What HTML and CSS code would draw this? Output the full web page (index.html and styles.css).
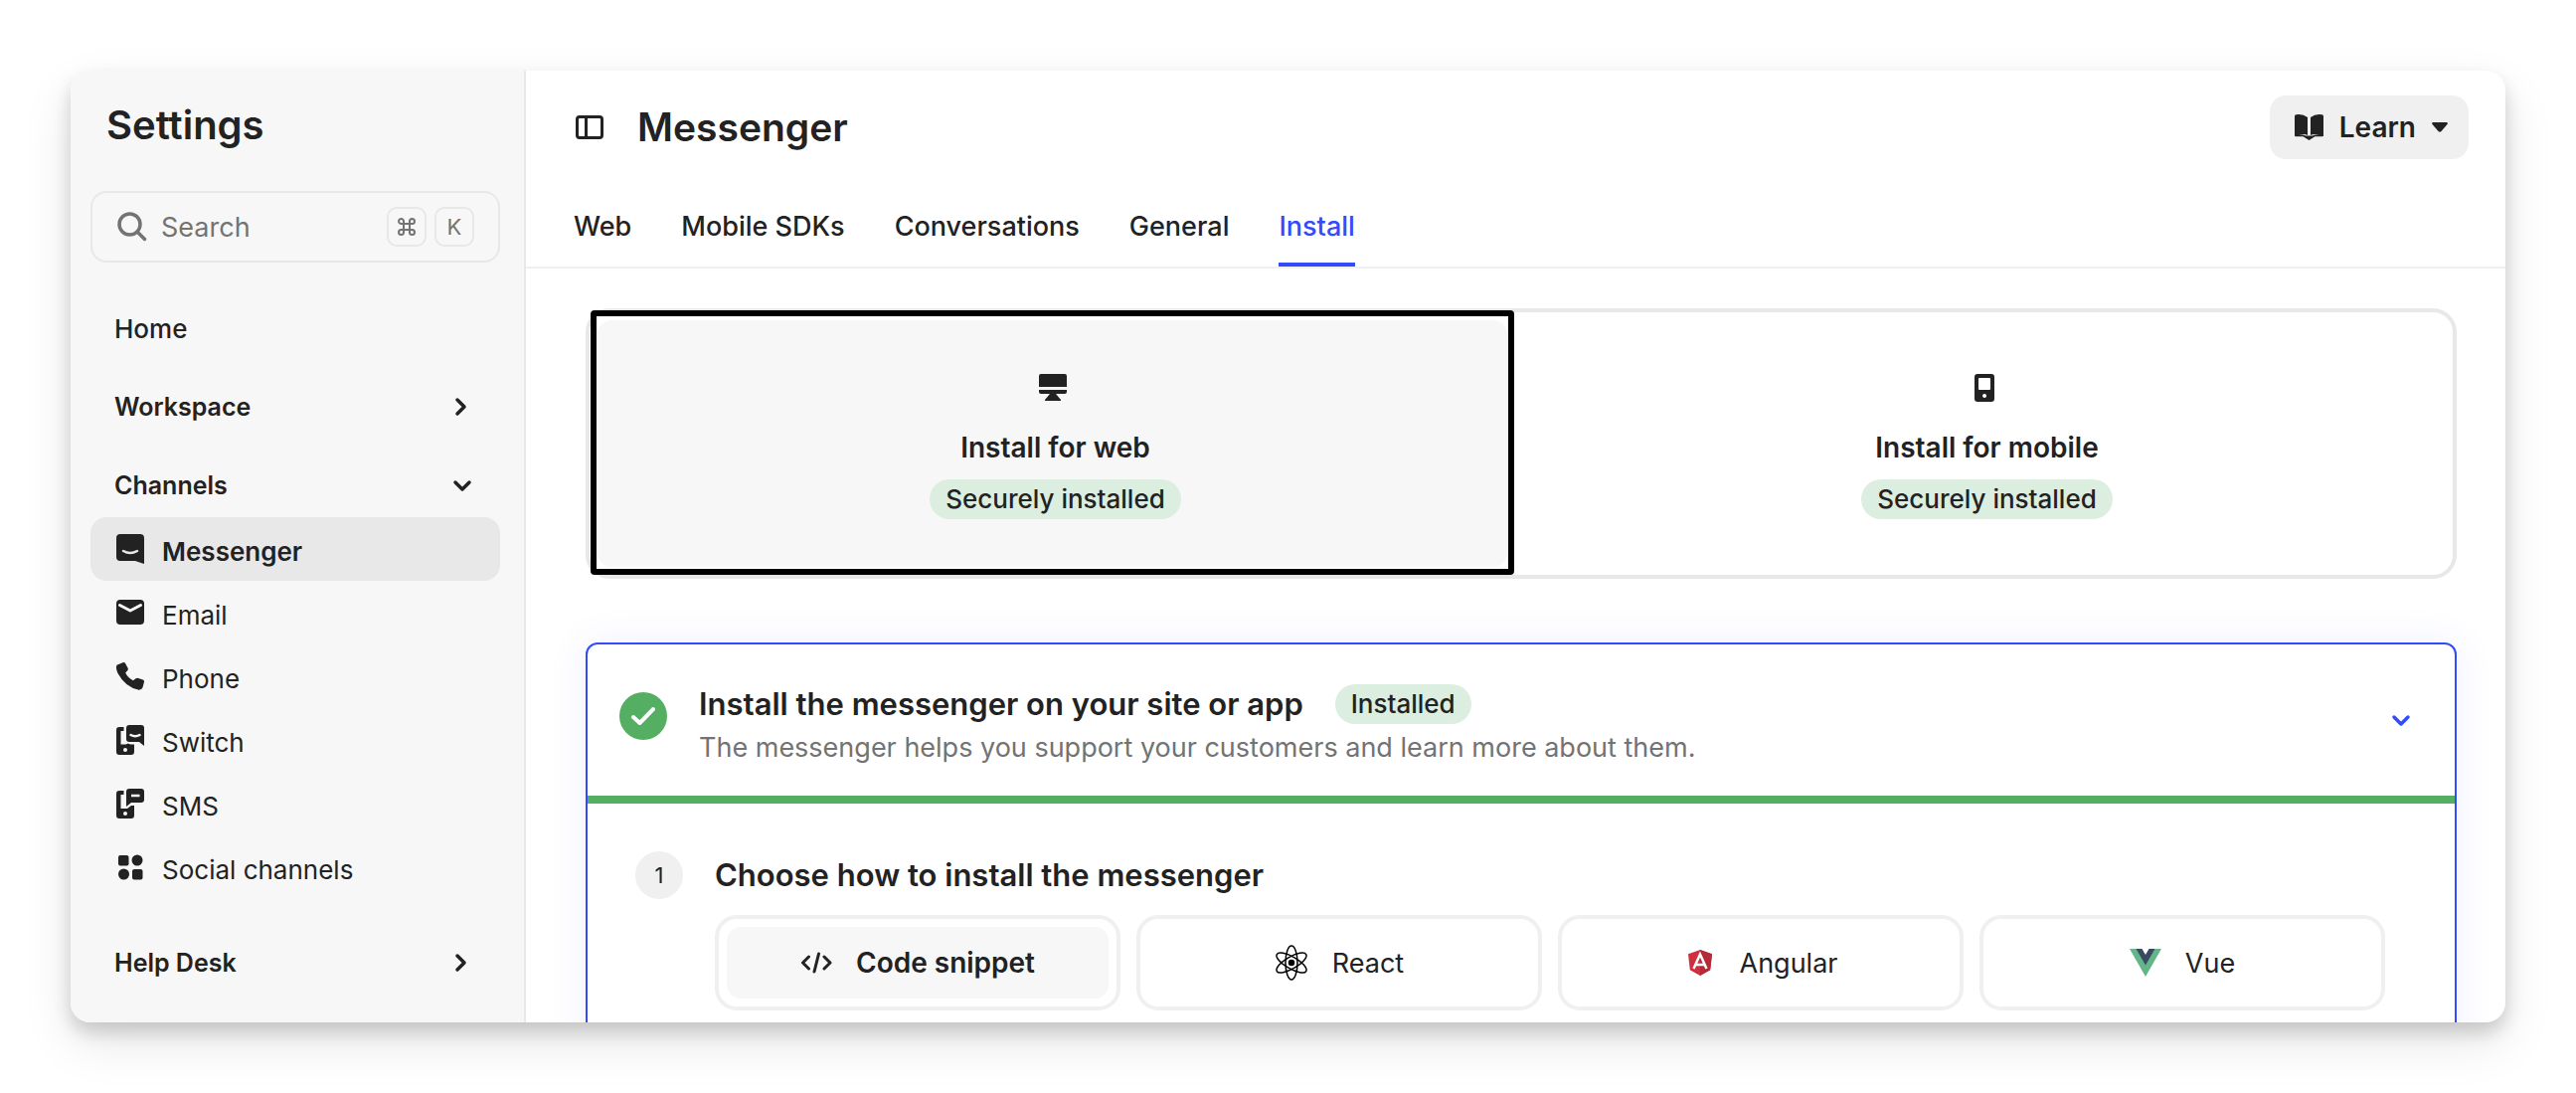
FILE: index.html
```html
<!DOCTYPE html>
<html lang="en">
<head>
  <meta charset="UTF-8">
  <title>Messenger Settings</title>
  <link rel="stylesheet" href="styles.css">
</head>
<body>

  <div class="window">
    <!-- Sidebar -->
    <aside class="sidebar">
      <h2 class="sidebar-title">Settings</h2>

      <label class="search">
        <svg class="search-icon" viewBox="0 0 30 30" fill="none" stroke="currentColor" stroke-width="3.500" stroke-linecap="round"><circle cx="12.500" cy="12.500" r="10.500"/><path d="M20 20L27.500 27.500"/></svg>
        <input type="text" placeholder="Search" aria-label="Search">
        <kbd><svg width="18" height="18" viewBox="0 0 18 18" fill="none" stroke="currentColor" stroke-width="2"><path d="M6 6H12V12H6ZM6 6V4A2.500 2.500 0 1 0 3.500 6H6M12 6H14.500A2.500 2.500 0 1 0 12 3.500V6M12 12V14.500A2.500 2.500 0 1 0 14.500 12H12M6 12H3.500A2.500 2.500 0 1 0 6 14.500V12"/></svg></kbd>
        <kbd>K</kbd>
      </label>

      <nav>
        <a href="#" class="group plain">Home</a>
        <a href="#" class="group">Workspace
          <svg class="chevron" viewBox="0 0 20 20"><path d="M5 3l7 7-7 7"/></svg>
        </a>
        <a href="#" class="group">Channels
          <svg class="chevron" viewBox="0 0 20 20"><path d="M3 7l7 7 7-7"/></svg>
        </a>

        <a href="#" class="item active">
          <svg class="icon" viewBox="0 0 28 30"><path d="M4 0H24a4 4 0 0 1 4 4V30L19 27H4a4 4 0 0 1-4-4V4a4 4 0 0 1 4-4z"/><path d="M7 17q7 4 14 0" fill="none" stroke="#e8e8e8" stroke-width="2.500" stroke-linecap="round"/></svg>
          Messenger
        </a>
        <a href="#" class="item">
          <svg class="icon" viewBox="0 0 28 30"><rect y="2" width="28" height="25" rx="4"/><path d="M3.500 7.500L14 13l10.500-5.500" fill="none" stroke="#f7f7f7" stroke-width="3" stroke-linecap="round" stroke-linejoin="round"/></svg>
          Email
        </a>
        <a href="#" class="item">
          <svg class="icon" viewBox="0 0 28 30"><path d="M1 3.500L6.500 1.200Q8.300.5 9.200 2.200L11.600 6.700Q12.300 8.200 11 9.600L9.200 11.500Q11.500 16.500 17 19.300L19.500 17.300Q20.800 16.300 22.300 17L26.800 18.600Q28.400 19.300 27.900 21L26.500 26.300Q25.600 28.700 22.700 28.700Q9 26 1.500 12Q-.5 7.500.1 4.800Q.3 3.900 1 3.500z"/></svg>
          Phone
        </a>
        <a href="#" class="item">
          <svg class="icon" viewBox="0 0 28 30"><path d="M3 2H7.500V6H4.500V19.500H9.500L12 18.500Q13 19.500 15 19.500H18V27a3 3 0 0 1-3 3H3a3 3 0 0 1-3-3V5a3 3 0 0 1 3-3z"/><circle cx="9" cy="25" r="2" fill="#f7f7f7"/><path d="M13 0H25a3 3 0 0 1 3 3V21L23 17H13a3 3 0 0 1-3-3V3a3 3 0 0 1 3-3z"/><path d="M14.500 10q4.500 2.500 9 0" fill="none" stroke="#f7f7f7" stroke-width="2.500" stroke-linecap="round"/></svg>
          Switch
        </a>
        <a href="#" class="item">
          <svg class="icon" viewBox="0 0 28 30"><path d="M3 2H7.500V6H4.500V20H11L15 17H18V27a3 3 0 0 1-3 3H3a3 3 0 0 1-3-3V5a3 3 0 0 1 3-3z"/><circle cx="9" cy="25" r="2" fill="#f7f7f7"/><path d="M13 0H25a3 3 0 0 1 3 3V11a3 3 0 0 1-3 3H15L10 18V3a3 3 0 0 1 3-3z"/><path d="M15 7H23.500" stroke="#f7f7f7" stroke-width="2.500"/></svg>
          SMS
        </a>
        <a href="#" class="item">
          <svg class="icon" viewBox="0 0 28 30"><rect x="2" y="3" width="10.500" height="10.500" rx="2"/><circle cx="21" cy="8" r="5.500"/><circle cx="7.500" cy="22" r="5.500"/><rect x="16" y="17" width="10.500" height="10.500" rx="2"/></svg>
          Social channels
        </a>

        <a href="#" class="group last">Help Desk
          <svg class="chevron" viewBox="0 0 20 20"><path d="M5 3l7 7-7 7"/></svg>
        </a>
      </nav>
    </aside>

    <!-- Main area -->
    <main class="main">
      <header class="header">
        <button class="toggle" aria-label="Toggle sidebar">
          <svg width="28" height="24" viewBox="0 0 28 24" fill="none" stroke="currentColor" stroke-width="3"><rect x="1.500" y="1.500" width="25" height="21" rx="2.500"/><path d="M10.500 2V22"/></svg>
        </button>
        <h1>Messenger</h1>
        <button class="learn">
          <svg width="29" height="26" viewBox="0 0 29 26" fill="currentColor"><path d="M0 2Q0 .5 1.500.3Q8-.8 13 3V21Q9 18.500 1.500 22Q0 22 0 20.500zM29 2Q29 .5 27.500.3Q21-.8 16 3V21Q20 18.500 27.500 22Q29 22 29 20.500z"/><path d="M0 20Q8 20 11 21.500H18Q21 20 29 20V21Q29 22.300 27.500 22.300H20.500L14.500 26L8.500 22.300H1.500Q0 22.300 0 21z"/></svg>
          Learn
          <svg width="16" height="11" viewBox="0 0 16 11" fill="currentColor"><path d="M1 0H15Q16.500.5 15.500 2L9.500 9Q8 10.500 6.500 9L.5 2Q-.5.5 1 0z"/></svg>
        </button>
      </header>

      <nav class="tabs">
        <a href="#">Web</a>
        <a href="#">Mobile SDKs</a>
        <a href="#">Conversations</a>
        <a href="#">General</a>
        <a href="#" class="current">Install</a>
      </nav>

      <div class="content">
        <!-- Platform picker -->
        <div class="platforms">
          <button class="platform selected">
            <svg width="30" height="28" viewBox="0 0 30 28" fill="currentColor"><path d="M3 0H27a2 2 0 0 1 2 2V13H1V2a2 2 0 0 1 2-2zM1 16H29V18a2 2 0 0 1-2 2H18L23 26V27H7V26L12 20H3a2 2 0 0 1-2-2z"/></svg>
            <span class="platform-name">Install for web</span>
            <span class="badge">Securely installed</span>
          </button>
          <button class="platform">
            <svg width="30" height="28" viewBox="0 0 30 28" fill="currentColor" fill-rule="evenodd"><path d="M8 0H22a3 3 0 0 1 3 3V25a3 3 0 0 1-3 3H8a3 3 0 0 1-3-3V3a3 3 0 0 1 3-3zM10 4a1 1 0 0 0-1 1V15a1 1 0 0 0 1 1H20a1 1 0 0 0 1-1V5a1 1 0 0 0-1-1zM15 20a2 2 0 1 0 .1 0z"/></svg>
            <span class="platform-name">Install for mobile</span>
            <span class="badge">Securely installed</span>
          </button>
        </div>

        <!-- Setup steps -->
        <section class="setup">
          <div class="setup-head">
            <svg class="check" viewBox="0 0 48 48"><circle cx="24" cy="24" r="24" fill="#54af62"/><path d="M14 25l6.500 6L34 17" fill="none" stroke="#fff" stroke-width="4" stroke-linecap="round" stroke-linejoin="round"/></svg>
            <div class="setup-text">
              <h3>Install the messenger on your site or app <span class="badge">Installed</span></h3>
              <p>The messenger helps you support your customers and learn more about them.</p>
            </div>
            <button class="collapse" aria-label="Collapse">
              <svg class="chevron" viewBox="0 0 20 20"><path d="M3 7l7 7 7-7"/></svg>
            </button>
          </div>

          <div class="step">
            <span class="step-number">1</span>
            <div class="step-body">
              <h3>Choose how to install the messenger</h3>
              <div class="methods">
                <button class="method chosen">
                  <svg width="32" height="24" viewBox="0 0 32 24" fill="none" stroke="currentColor" stroke-width="3" stroke-linecap="round" stroke-linejoin="round"><path d="M8.500 6L2.500 12l6 6M24 6l6 6-6 6M18.500 3l-4.500 18"/></svg>
                  Code snippet
                </button>
                <button class="method">
                  <svg width="34" height="36" viewBox="0 0 34 36" fill="none" stroke="#000" stroke-width="1.500"><ellipse cx="17" cy="18" rx="6" ry="17"/><ellipse cx="17" cy="18" rx="6" ry="17" transform="rotate(60 17 18)"/><ellipse cx="17" cy="18" rx="6" ry="17" transform="rotate(120 17 18)"/><circle cx="17" cy="18" r="2.500" fill="#000"/></svg>
                  React
                </button>
                <button class="method">
                  <svg width="32" height="26" viewBox="-4 0 32 26"><path d="M12 0L24 4.300 22.200 20.300 12 26 1.800 20.300 0 4.300z" fill="#cf2f3f"/><path d="M12 0L24 4.300 22.200 20.300 12 26z" fill="#b32a38"/><path d="M5.500 19L12 4.500 18.500 19M8 15H16" fill="none" stroke="#fff" stroke-width="2.500"/></svg>
                  Angular
                </button>
                <button class="method">
                  <svg width="32" height="28" viewBox="0 0 32 28"><path d="M0 0H7L16 15 25 0H32L16 28z" fill="#64b587"/><path d="M6.500 0H12.500L16 6 19.500 0H25.500L16 16.500z" fill="#3a4a5e"/></svg>
                  Vue
                </button>
              </div>
            </div>
          </div>
        </section>
      </div>
    </main>
  </div>

</body>
</html>
```
FILE: styles.css
```css
* { box-sizing: border-box; }

body {
  font-family: Inter, "Liberation Sans", sans-serif;
  font-size: 26px;
  color: #222;
  background: #fff;
  margin: 0;
  padding: 71px;
  height: 100vh;
}

h1, h2, h3, p { margin: 0; }

a {
  color: inherit;
  text-decoration: none;
}

button {
  font: inherit;
  color: inherit;
  background: none;
  border: none;
  padding: 0;
  cursor: pointer;
}

svg { flex-shrink: 0; }

.window {
  display: flex;
  height: 100%;
  background: #fff;
  border-radius: 20px;
  overflow: hidden;
  box-shadow: 0 10px 18px rgba(0, 0, 0, 0.16), 0 20px 50px rgba(0, 0, 0, 0.1);
}

/* Sidebar */
.sidebar {
  width: 458px;
  flex-shrink: 0;
  padding: 31px 24px 0 20px;
  background: #f7f7f7;
  border-right: 2px solid #e8e8e8;
}

.sidebar-title {
  padding-left: 16px;
  font-size: 40px;
  line-height: 48px;
  font-weight: 600;
}

.search {
  display: flex;
  align-items: center;
  gap: 8px;
  height: 72px;
  margin-top: 42px;
  padding: 0 24px 0 25px;
  border: 2px solid #e8e8e8;
  border-radius: 16px;
  color: #737373;
}

.search-icon {
  width: 30px;
  height: 30px;
}

.search input {
  flex: 1;
  min-width: 0;
  margin-left: 6px;
  padding: 0;
  border: none;
  outline: none;
  background: none;
  font: inherit;
  font-size: 27px;
}

.search input::placeholder { color: #737373; }

kbd {
  display: flex;
  align-items: center;
  justify-content: center;
  width: 40px;
  height: 40px;
  border: 2px solid #e8e8e8;
  border-radius: 10px;
  font-family: inherit;
  font-size: 22px;
}

nav { font-weight: 500; }

.group {
  display: flex;
  align-items: center;
  justify-content: space-between;
  height: 64px;
  margin-top: 15px;
  padding: 0 28px 0 24px;
  font-size: 25px;
  font-weight: 600;
}

.group.plain {
  margin-top: 34px;
  font-size: 26px;
  font-weight: 500;
}

.group.last { margin-top: 32px; }

.chevron {
  width: 20px;
  height: 20px;
  fill: none;
  stroke: currentColor;
  stroke-width: 3.5;
  stroke-linecap: round;
  stroke-linejoin: round;
}

.item {
  display: flex;
  align-items: center;
  gap: 18px;
  height: 64px;
  padding: 4px 26px 0;
  border-radius: 16px;
  font-weight: 400;
}

.item.active {
  background: #e8e8e8;
  font-weight: 600;
}

.icon {
  width: 28px;
  height: 30px;
  margin-bottom: 4px;
  fill: #222;
}

/* Main area */
.main {
  flex: 1;
  min-width: 0;
}

.header {
  display: flex;
  align-items: center;
  gap: 34px;
  padding: 25px 37px 0 50px;
}

.toggle { display: flex; }

.header h1 {
  flex: 1;
  font-size: 39px;
  line-height: 48px;
  font-weight: 600;
}

.learn {
  display: flex;
  align-items: center;
  gap: 16px;
  height: 64px;
  padding: 0 21px 0 25px;
  border-radius: 16px;
  background: #f0f0f0;
  font-size: 28px;
  font-weight: 600;
}

.tabs {
  display: flex;
  gap: 50px;
  margin-top: 28px;
  padding: 0 48px;
  border-bottom: 2px solid #f0f0f0;
  font-size: 27px;
  line-height: 80px;
}

.tabs a { height: 80px; }

.tabs .current {
  color: #334bfa;
  border-bottom: 4px solid #334bfa;
}

.content { padding: 40px 49px 0 60px; }

.platforms {
  display: flex;
  height: 272px;
  border: 4px solid #e8e8e8;
  border-radius: 24px;
}

.platform {
  position: relative;
  z-index: 0;
  flex: 1;
  display: flex;
  flex-direction: column;
  align-items: center;
  padding-top: 62px;
}

.platform svg { margin-right: 6px; }

.platform-name {
  margin-top: 28px;
  font-size: 28px;
  line-height: 36px;
  font-weight: 600;
}

.platform .badge { margin-top: 14px; }

/* Grey fill and thick frame over the selected platform */
.selected::before {
  content: "";
  position: absolute;
  inset: 8px 14px 8px 8px;
  z-index: -1;
  border-radius: 14px;
  background: #f7f7f7;
}

.selected::after {
  content: "";
  position: absolute;
  inset: -2px 7px 0 1px;
  border: 6px solid #000;
  border-radius: 4px;
}

.badge {
  display: inline-block;
  padding: 0 16px;
  border-radius: 20px;
  background: #dceedf;
  font-size: 26px;
  line-height: 40px;
  font-weight: 500;
}

.setup {
  height: 600px;
  margin-top: 64px;
  border: 2px solid #334bfa;
  border-radius: 12px;
  box-shadow: 0 0 40px rgba(51, 75, 250, 0.08);
}

.setup-head {
  display: flex;
  align-items: flex-start;
  height: 160px;
  padding: 40px 44px 40px 32px;
  border-bottom: 8px solid #54af62;
}

.check {
  width: 48px;
  height: 48px;
  margin: 8px 32px 0 0;
}

.setup-text { flex: 1; }

.setup h3 {
  display: flex;
  align-items: center;
  gap: 32px;
  font-size: 31px;
  line-height: 40px;
  font-weight: 600;
}

.setup p {
  margin-top: 4px;
  color: #737373;
  font-size: 27px;
  line-height: 40px;
}

.collapse {
  display: flex;
  align-self: center;
  color: #334bfa;
}

.step {
  display: flex;
  gap: 32px;
  padding: 48px 70px 0 48px;
}

.step-number {
  width: 48px;
  height: 48px;
  border-radius: 50%;
  background: #f0f0f0;
  font-size: 22px;
  line-height: 48px;
  text-align: center;
}

.step-body { flex: 1; }

.step h3 { line-height: 48px; }

.methods {
  display: grid;
  grid-template-columns: repeat(4, 1fr);
  gap: 16px;
  margin-top: 16px;
}

.method {
  position: relative;
  z-index: 0;
  display: flex;
  align-items: center;
  justify-content: center;
  gap: 24px;
  height: 96px;
  border: 4px solid #f0f0f0;
  border-radius: 22px;
  font-size: 27px;
}

.chosen {
  font-size: 28px;
  font-weight: 600;
}

.chosen::before {
  content: "";
  position: absolute;
  inset: 8px;
  z-index: -1;
  border-radius: 14px;
  background: #f7f7f7;
}
```
